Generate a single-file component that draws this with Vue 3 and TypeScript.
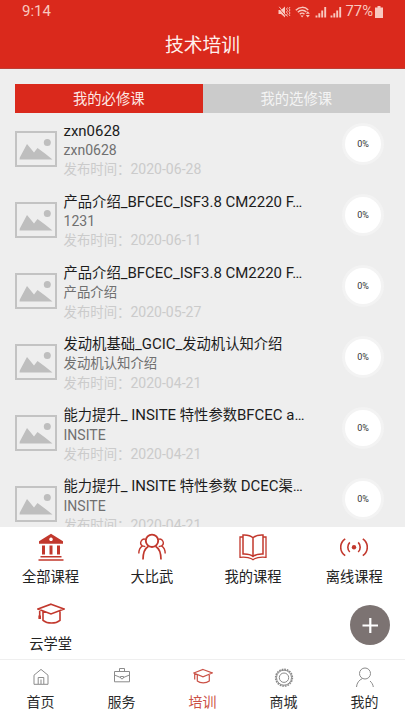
<script setup lang="ts">
interface Course {
  title: string
  sub: string
  date: string
  progress: number
}

interface Run {
  text: string
  latin: boolean
}

const courses: Course[] = [
  { title: 'zxn0628', sub: 'zxn0628', date: '2020-06-28', progress: 0 },
  { title: '产品介绍_BFCEC_ISF3.8 CM2220 F…', sub: '1231', date: '2020-06-11', progress: 0 },
  { title: '产品介绍_BFCEC_ISF3.8 CM2220 F…', sub: '产品介绍', date: '2020-05-27', progress: 0 },
  { title: '发动机基础_GCIC_发动机认知介绍', sub: '发动机认知介绍', date: '2020-04-21', progress: 0 },
  { title: '能力提升_ INSITE 特性参数BFCEC a…', sub: 'INSITE', date: '2020-04-21', progress: 0 },
  { title: '能力提升_ INSITE 特性参数 DCEC渠…', sub: 'INSITE', date: '2020-04-21', progress: 0 },
]

const entries = [
  { icon: 'bank', label: '全部课程' },
  { icon: 'people', label: '大比武' },
  { icon: 'book', label: '我的课程' },
  { icon: 'signal', label: '离线课程' },
  { icon: 'cap', label: '云学堂' },
]

const navs = [
  { icon: 'home', label: '首页' },
  { icon: 'case', label: '服务' },
  { icon: 'cap', label: '培训' },
  { icon: 'gear', label: '商城' },
  { icon: 'user', label: '我的' },
]
const activeNav = 2

// Latin runs are set slightly larger than the Chinese characters beside them.
function runs(text: string): Run[] {
  const parts = text.match(/[\x20-\x7e…]+|[^\x20-\x7e…]+/g) ?? []
  return parts.map((p) => ({ text: p, latin: /^[\x20-\x7e…]/.test(p) }))
}
</script>

<template>
  <div class="screen">
    <header class="header">
      <div class="status">
        <span class="clock">9:14</span>
        <div class="indicators">
          <svg class="mute" viewBox="0 0 13 12">
            <path d="M.5 4H3l4-3.500v11L3 8H.5z" fill="currentColor" />
            <path d="M.5 1.500l8 9.500" stroke="#da291c" stroke-width=".9" />
            <path d="M1.200 .8l7.300 9.200M9.500 1.500l-1 1.500 1 1.500-1 1.500 1 1.500-1 1.500 1 1.500M12 1l-1 1.500 1 1.500-1 1.500 1 1.500-1 1.500 1 1.500" fill="none" stroke="currentColor" stroke-width=".9" />
          </svg>
          <svg class="wifi" viewBox="0 0 16 12">
            <path d="M.8 4.200C4.500.4 10 .4 13.200 4M2.800 6.200c2.500-2.600 6.200-2.600 8.600-.2M4.800 8.200c1.400-1.400 3.300-1.400 4.700 0" fill="none" stroke="currentColor" stroke-width="1.400" />
            <path d="M5.500 9.500h3.200l-1.600 2zM12.800 5.200l2 2.500h-4zM12.800 11.500l2-2.500h-4z" fill="currentColor" />
          </svg>
          <svg v-for="n in 2" :key="n" class="bars" viewBox="0 0 12 12">
            <path d="M1.500 11.500v-2M4.300 11.500V7.300M7.200 11.500V4.600M10.200 11.500V1" stroke="currentColor" stroke-width="1.900" />
          </svg>
          <span class="percent">77%</span>
          <svg class="battery" viewBox="0 0 8 12"><path d="M2.500 0h3v1.500H8V12H0V1.500h2.500z" fill="currentColor" /></svg>
        </div>
      </div>
      <h1 class="title">技术培训</h1>
    </header>

    <main class="content">
      <div class="tabs">
        <button class="tab tab-on">我的必修课</button>
        <button class="tab">我的选修课</button>
      </div>
      <ul class="list">
        <li v-for="(c, i) in courses" :key="i" class="course">
          <svg class="thumb" viewBox="0 0 42 36">
            <rect x="1" y="1" width="40" height="34" fill="none" stroke="#c3c3c3" stroke-width="2" />
            <circle cx="32.300" cy="11.500" r="3.500" fill="#bebebe" />
            <path d="M4.500 28.500L4.800 26.500 12 13l7 8.500 3.500-4.500c5 3.500 10 7.500 15 11.500z" fill="#bebebe" />
          </svg>
          <div class="info">
            <p class="name"><span v-for="(r, k) in runs(c.title)" :key="k" :class="{ latin: r.latin }">{{ r.text }}</span></p>
            <p class="sub"><span v-for="(r, k) in runs(c.sub)" :key="k" :class="{ latin: r.latin }">{{ r.text }}</span></p>
            <p class="date">发布时间：<span class="latin">{{ c.date }}</span></p>
          </div>
          <div class="progress">{{ c.progress }}%</div>
        </li>
      </ul>
    </main>

    <section class="panel">
      <div v-for="e in entries" :key="e.label" class="entry">
        <svg class="entry-icon" viewBox="0 0 28 28" fill="none" stroke="currentColor" stroke-width="1.400">
          <template v-if="e.icon === 'bank'">
            <path d="M14 .8L26 8.200v2.500H2V8.200zM14 4.500a1.800 1.800 0 1 0 .01 0z" fill="currentColor" fill-rule="evenodd" stroke="none" />
            <path d="M6.500 12.500v9M14 12.500v9M21.500 12.500v9" stroke-width="3" />
            <path d="M3.500 23.800h21M1.500 27h25" stroke-width="1.500" />
          </template>
          <template v-else-if="e.icon === 'people'">
            <path d="M10.500 13.200C6.500 15.500 5 20 5 26.500M17.500 13.200c4 2.300 5.500 6.800 5.500 13.300" stroke-width="1.700" />
            <circle cx="14" cy="7.800" r="6.200" stroke-width="1.900" />
            <path d="M7.500 6.300a3.600 3.600 0 0 0-3 6.500M4.500 12.800C2 14.300.8 17 .8 20.500M20.500 6.300a3.600 3.600 0 0 1 3 6.500M23.500 12.800c2.500 1.500 3.700 4.200 3.700 7.700M4.500 12.800l2.800.8M23.500 12.800l-2.800.8" />
          </template>
          <template v-else-if="e.icon === 'book'">
            <path d="M14 4.800C11.500 2.300 8 1.800 4 2v19c4-.2 7.500.3 10 2.500 2.500-2.200 6-2.700 10-2.500V2c-4-.2-7.500.3-10 2.800zM14 4.800v18.500" stroke-width="1.500" />
            <path d="M4 4H1v20.300c5-.4 9 0 11.500 1.500l1.500 1 1.500-1c2.500-1.500 6.500-1.900 11.500-1.500V4h-3" stroke-width="1.300" />
          </template>
          <template v-else-if="e.icon === 'signal'">
            <circle cx="14" cy="14.200" r="2.200" fill="currentColor" stroke="none" />
            <path d="M9.800 9.400a6.800 6.800 0 0 0 0 9.600M18.200 9.400a6.800 6.800 0 0 1 0 9.600M5.200 5.800C-.8 10-.8 18.400 5.200 22.600M22.800 5.800c6 4.200 6 12.600 0 16.800" stroke-width="1.600" />
          </template>
          <template v-else>
            <path d="M14 4.200L27 9l-13 5-13-5zM6 11.500v8.800c4.500 3.600 12.500 3.600 17 0v-8.800M2.700 9.700v8.500" stroke-width="1.600" />
            <path d="M2.700 15.500v3.500" stroke-width="2.600" />
          </template>
        </svg>
        <span class="entry-label">{{ e.label }}</span>
      </div>
      <button class="fab" aria-label="添加">
        <svg viewBox="0 0 40 40"><path d="M20.300 13v15M12.500 20.500h15.500" stroke="#fff" stroke-width="2.200" /></svg>
      </button>
    </section>

    <nav class="nav">
      <div v-for="(n, i) in navs" :key="n.label" class="nav-item" :class="{ active: i === activeNav }">
        <svg class="nav-icon" viewBox="0 0 20 20" fill="none" stroke="currentColor" stroke-width="1">
          <path v-if="n.icon === 'home'" d="M3 8.200L10 2.400l7 5.800v9.100H3zM7.200 17v-6.500h5.600V17M10 17v-4.500" />
          <template v-else-if="n.icon === 'case'">
            <path d="M2.500 4.500h15v10.300h-15zM7.500 4.500v-3h5v3M2.500 8l6 2.500M17.500 8l-6 2.500" />
            <path d="M8.500 9.500h3v1.500l-1.500 1-1.500-1z" />
          </template>
          <path v-else-if="n.icon === 'cap'" d="M10 2.500L19.300 6 10 9.800.8 6zM4.300 8v6c3 2.600 8.800 2.600 12 0V8M1.700 6.500v6" stroke-width="1.200" />
          <template v-else-if="n.icon === 'gear'">
            <circle cx="10" cy="10.700" r="8.400" stroke-width="1.500" stroke-dasharray="1.700 .938" />
            <circle cx="10" cy="10.700" r="7.500" />
            <circle cx="10" cy="10.700" r="4.700" />
          </template>
          <template v-else>
            <circle cx="10" cy="6.500" r="5.500" />
            <path d="M7.500 11.500C4 13 1.800 16 1.500 20M15 14c1.700 1.500 3 3.500 3.300 6" />
          </template>
        </svg>
        <span class="nav-label">{{ n.label }}</span>
      </div>
    </nav>
  </div>
</template>

<style>
body {
  margin: 0;
  overflow: hidden;
}
</style>

<style scoped>
.screen {
  display: flex;
  flex-direction: column;
  width: 405px;
  height: 720px;
  overflow: hidden;
  background: #fff;
  font-family: Roboto, "Noto Sans CJK SC", sans-serif;
}
.header {
  box-sizing: border-box;
  flex: none;
  height: 69px;
  background: #da291c;
  border-bottom: 1px solid #bd3f35;
}
.status {
  display: flex;
  justify-content: space-between;
  align-items: center;
  height: 23px;
  padding: 0 22px;
  color: #f9c8bf;
}
.clock {
  font-size: 15px;
  line-height: 23px;
}
.indicators {
  display: flex;
  align-items: center;
}
.mute { width: 13px; height: 12px; margin-right: 4px; }
.wifi { width: 16px; height: 12px; margin-right: 4px; }
.bars { width: 12px; height: 12px; margin-right: 3px; }
.percent { margin-left: 1px; font-size: 14.800px; line-height: 23px; }
.battery { width: 8px; height: 12px; margin-left: 2px; }
.title {
  margin: 0;
  padding-top: 9px;
  color: #fff0ed;
  font-size: 18.800px;
  font-weight: 400;
  line-height: 28px;
  text-align: center;
}
.content {
  box-sizing: border-box;
  flex: none;
  height: 458px;
  padding: 15px 15px 0;
  overflow: hidden;
  background: #eee;
}
.tabs {
  display: flex;
  height: 29px;
}
.tab {
  flex: 1;
  padding: 2px 0 0;
  border: 0;
  background: #cbcbcb;
  color: #f4f4f4;
  font: inherit;
  font-size: 14.300px;
  line-height: 27px;
}
.tab-on {
  background: #da291c;
  color: #fde8e4;
}
.list {
  margin: 0;
  padding: 8px 0 0;
  list-style: none;
}
.course {
  display: flex;
  height: 71.100px;
}
.thumb {
  flex: none;
  width: 42px;
  height: 36px;
  margin-top: 10px;
}
.info {
  flex: 1;
  min-width: 0;
  margin-left: 6.500px;
  padding-top: 1px;
}
.info p {
  margin: 0;
  height: 19.200px;
  line-height: 19.200px;
  white-space: pre;
}
.info .name { color: #1c1c1c; font-size: 14.300px; }
.info .sub { color: #707070; font-size: 13.400px; }
.info .date { color: #cbcbcb; font-size: 13.400px; }
.latin { font-size: 1.048em; }
.progress {
  flex: none;
  box-sizing: border-box;
  width: 42px;
  height: 42px;
  margin: 2px 6px 0 0;
  border: 3px solid #f3f3f3;
  border-radius: 50%;
  background: #fff;
  color: #333;
  font-size: 9px;
  line-height: 36px;
  text-align: center;
}
.panel {
  position: relative;
  box-sizing: border-box;
  flex: none;
  display: grid;
  grid-template-columns: repeat(4, 1fr);
  grid-auto-rows: 66.500px;
  height: 132px;
  padding-top: 6px;
}
.entry {
  display: flex;
  flex-direction: column;
  align-items: center;
}
.entry-icon {
  width: 28px;
  height: 28px;
  color: #c2382d;
}
.entry-label {
  margin-top: 6px;
  color: #222;
  font-size: 14.250px;
  line-height: 20px;
}
.fab {
  position: absolute;
  right: 15px;
  bottom: 14px;
  width: 40px;
  height: 40px;
  padding: 0;
  border: 0;
  border-radius: 50%;
  background: #7c7372;
}
.fab svg { display: block; width: 40px; height: 40px; }
.nav {
  box-sizing: border-box;
  flex: none;
  display: flex;
  height: 61px;
  padding-top: 7px;
  border-top: 1px solid #efefef;
}
.nav-item {
  flex: 1;
  display: flex;
  flex-direction: column;
  align-items: center;
  color: #8b8b8b;
}
.nav-icon { width: 20px; height: 20px; }
.nav-label {
  margin-top: 5px;
  color: #2b2b2b;
  font-size: 14px;
  line-height: 20px;
}
.active, .active .nav-label { color: #cb5146; }
</style>
